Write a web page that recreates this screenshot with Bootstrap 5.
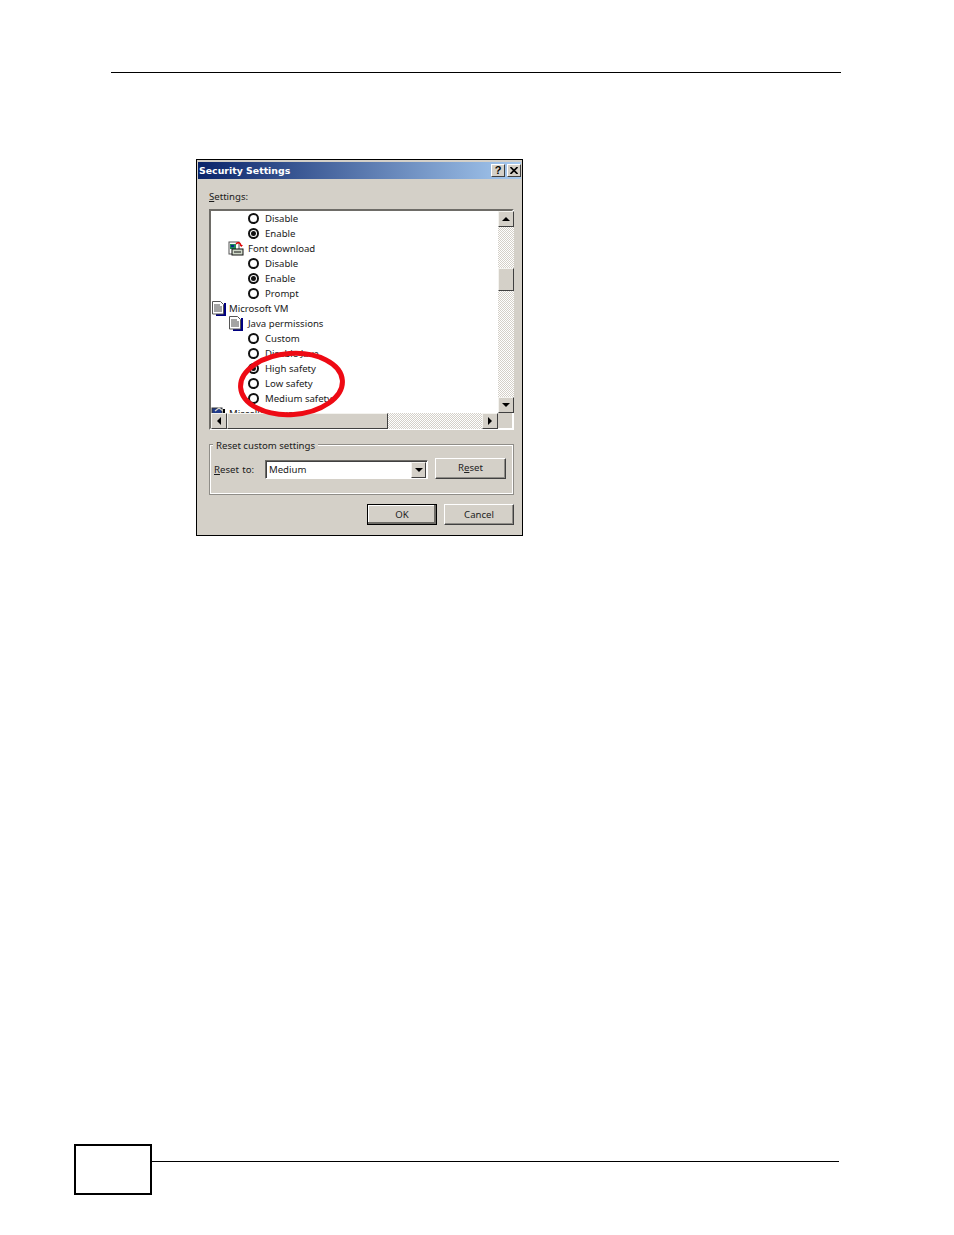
<!DOCTYPE html>
<html lang="en"><head><meta charset="utf-8"><title>Security Settings</title>
<link rel="stylesheet" href="https://cdn.jsdelivr.net/npm/bootstrap@5.3.0/dist/css/bootstrap.min.css">
<style>
html,body{background:#fff}
.sheet{width:954px;height:1235px;padding-top:72px;position:relative;overflow:hidden}
.top-rule{height:1px;background:#000;margin-left:111px;width:730px}
.dlg{width:327px;height:377px;margin:86px 0 0 196px;background:#d4d0c8;border:1px solid #000;padding:2px 1px 0 1px;position:relative;font:9.6px/15px "Noto Sans","DejaVu Sans",sans-serif;color:#1a1a1a}
.ttl{height:17px;background:linear-gradient(90deg,#0a246a,#a6caf0);color:#fff;font:700 9.4px/17px "DejaVu Sans",sans-serif;padding:0 0 0 1px}
.tbs{gap:2px}
.tb{width:14px;height:13px;background:#d4d0c8;border:1px solid;border-color:#fff #404040 #404040 #fff;color:#000;display:flex;align-items:center;justify-content:center;font:700 11px/1 "Liberation Sans",sans-serif}
.tb svg{width:8px;height:7px}
.lbl{margin:10px 0 0 11px;height:15px;line-height:15px}
.lbl u,.ub u{text-underline-offset:1px}
.lst{margin:5px 0 0 11px;width:305px;height:221px;border:2px solid;border-color:#6e6c67 #fff #fff #6e6c67;background:#d4d0c8;display:grid;grid-template-columns:287px 16px;grid-template-rows:202px 16px}
.view{background:#fff;overflow:hidden}
.rw{height:15px;display:flex;align-items:center;white-space:nowrap;line-height:15px}
.i2{padding-left:37px}.i1{padding-left:17px}.i0{padding-left:0}
.rad{width:11px;height:11px;border:2px solid #111;border-radius:50%;margin-right:6px;flex:none;background:#fff;display:flex;align-items:center;justify-content:center}
.rad.on::after{content:"";width:5px;height:5px;border-radius:50%;background:#111}
.ico{width:16px;height:15px;flex:none;margin-right:2px}
.i1 .ico{margin-right:4px}
.dith{background:repeating-conic-gradient(#d4d0c8 0 25%,#fff 0 50%) 0 0/2px 2px}
.vs{display:flex;flex-direction:column}
.hs{display:flex}
.sb{background:#d4d0c8;border:1px solid;border-color:#f4f3ef #404040 #404040 #f4f3ef;display:flex;align-items:center;justify-content:center;flex:none}
.sq{width:16px;height:16px}
.th-gap{height:41px}.th-v{height:23px}.th-h{width:161px}
.tri-u{border:4px solid transparent;border-top:0;border-bottom-color:#000}
.tri-d{border:4px solid transparent;border-bottom:0;border-top-color:#000}
.tri-l{border:4px solid transparent;border-left:0;border-right-color:#000}
.tri-r{border:4px solid transparent;border-right:0;border-left-color:#000}
.grp{margin:14px 0 0 11px;width:305px;height:51px;border:1px solid #8f8d88;box-shadow:0 0 0 1px #fff inset;position:relative;padding:15px 4px 0 4px}
.lgd{position:absolute;left:3px;top:-6px;background:#d4d0c8;padding:0 3px;line-height:14px}
.ub{width:43px;flex:none;white-space:nowrap;word-spacing:1px}
.cmb{width:163px;height:19px;margin-left:8px;border:1px solid;border-color:#6e6c67 #fff #fff #6e6c67;background:#fff;box-shadow:inset 1px 1px 0 #404040;padding-left:3px;line-height:18px;position:relative}
.cmb .sb{position:absolute;right:1px;top:1px;width:15px;height:16px}
.wbtn{background:#d4d0c8;border:1px solid;border-color:#fff #404040 #404040 #fff;box-shadow:inset -1px -1px 0 #8f8d88;display:flex;align-items:center;justify-content:center;line-height:1;color:#222}
.rst{width:71px;height:21px;margin-left:7px;margin-top:-3px}
.okb{width:70px;height:21px;outline:1px solid #000;outline-offset:-1px;box-shadow:inset -2px -2px 0 #6e6c67,inset 1px 1px 0 #fff}
.ccb{width:70px;height:21px}
.foot{margin:9px 0 0 0;padding-right:7px;gap:7px}
.ring{position:absolute;left:232px;top:346px;width:118px;height:76px;overflow:visible}
.foot-box{position:absolute;left:74px;top:1144px;width:78px;height:51px;border:solid #000;border-width:2.5px}
.foot-rule{position:absolute;left:152px;top:1161px;width:687px;height:1px;background:#000}
</style></head><body>
<div class="sheet">
<div class="top-rule"></div>
<div class="dlg">
 <div class="ttl d-flex justify-content-between align-items-center"><span>Security Settings</span>
  <span class="d-flex tbs"><span class="tb">?</span><span class="tb"><svg viewBox="0 0 8 7"><path d="M.5 0l7 7M7.500 0l-7 7" stroke="#000" stroke-width="1.600"/></svg></span></span></div>
 <div class="lbl"><u>S</u>ettings:</div>
 <div class="lst">
  <div class="view">
   <div class="rw i2"><span class="rad"></span>Disable</div>
   <div class="rw i2"><span class="rad on"></span>Enable</div>
   <div class="rw i1"><svg class="ico" viewBox="0 0 16 15"><rect x="1" y="1" width="10" height="12" fill="#fff" stroke="#555"/><rect x="2" y="3" width="6" height="5" fill="#1f8a5a"/><path d="M3 4h3v2H3z" fill="#0a2a8a"/><path d="M8 3q3-3 5 1" fill="none" stroke="#d00" stroke-width="1.400"/><path d="M11.500 4h3.500l-1.700 2z" fill="#d00"/><rect x="4" y="8" width="11" height="6" fill="#cfd8c8" stroke="#111"/><path d="M6 11h7" stroke="#111"/></svg>Font download</div>
   <div class="rw i2"><span class="rad"></span>Disable</div>
   <div class="rw i2"><span class="rad on"></span>Enable</div>
   <div class="rw i2"><span class="rad"></span>Prompt</div>
   <div class="rw i0"><svg class="ico" viewBox="0 0 16 15"><path d="M13 2h2v13H5v-2h8z" fill="#000080"/><path d="M1.500.500h8l3 3v9.500h-11z" fill="#fff" stroke="#555"/><path d="M3 4h6M3 6h8M3 8h8M3 10h8" stroke="#333" stroke-width=".9"/></svg>Microsoft VM</div>
   <div class="rw i1"><svg class="ico" viewBox="0 0 16 15"><path d="M13 2h2v13H5v-2h8z" fill="#000080"/><path d="M1.500.500h8l3 3v9.500h-11z" fill="#fff" stroke="#555"/><path d="M3 4h6M3 6h8M3 8h8M3 10h8" stroke="#333" stroke-width=".9"/></svg>Java permissions</div>
   <div class="rw i2"><span class="rad"></span>Custom</div>
   <div class="rw i2"><span class="rad"></span>Disable Java</div>
   <div class="rw i2"><span class="rad on"></span>High safety</div>
   <div class="rw i2"><span class="rad"></span>Low safety</div>
   <div class="rw i2"><span class="rad"></span>Medium safety</div>
   <div class="rw i0"><svg class="ico" viewBox="0 0 16 15"><rect x="1" y="2" width="10" height="12" fill="#1f3a8a" stroke="#333"/><path d="M4 5l4-3 4 3" fill="none" stroke="#d8d6c8" stroke-width="1.400"/><path d="M12 3h2v11h-2z" fill="#000"/></svg>Miscellaneous</div>
  </div>
  <div class="vs dith">
   <div class="sb sq"><span class="tri-u"></span></div>
   <div class="th-gap"></div>
   <div class="sb th-v"></div>
   <div class="flex-grow-1"></div>
   <div class="sb sq"><span class="tri-d"></span></div>
  </div>
  <div class="hs dith">
   <div class="sb sq"><span class="tri-l"></span></div>
   <div class="sb th-h"></div>
   <div class="flex-grow-1"></div>
   <div class="sb sq"><span class="tri-r"></span></div>
  </div>
  <div></div>
 </div>
 <div class="grp">
  <span class="lgd">Reset custom settings</span>
  <div class="d-flex align-items-center">
   <span class="ub"><u>R</u>eset to:</span>
   <div class="cmb">Medium<span class="sb"><span class="tri-d"></span></span></div>
   <div class="wbtn rst">R<u>e</u>set</div>
  </div>
 </div>
 <div class="foot d-flex justify-content-end">
  <div class="wbtn okb">OK</div>
  <div class="wbtn ccb">Cancel</div>
 </div>
</div>
<svg class="ring" viewBox="232 346 118 76"><ellipse cx="291.500" cy="384" rx="51" ry="30.500" fill="none" stroke="#ee0a14" stroke-width="5" transform="rotate(-4 291.500 384)"/></svg>
<div class="foot-box"></div><div class="foot-rule"></div>
</div>
</body></html>
